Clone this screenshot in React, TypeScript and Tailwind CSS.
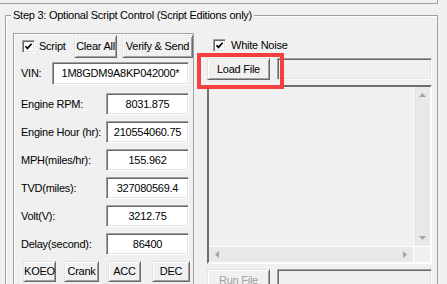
import type { ReactNode } from 'react';

const Btn = ({ children, className = '', disabled }: { children: ReactNode; className?: string; disabled?: boolean }) => (
  <div
    className={`flex shrink-0 items-center justify-center bg-[#f0f0f0] border border-t-[#e3e3e3] border-l-[#e3e3e3] border-b-[#696969] border-r-[#696969] shadow-[inset_1px_1px_0_#fff,inset_-1px_-1px_0_#a0a0a0] ${
      disabled ? 'text-[#a0a0a0]' : 'text-black'
    } ${className}`}
  >
    {children}
  </div>
);

const Field = ({ value, className = '', disabled }: { value?: string; className?: string; disabled?: boolean }) => (
  <div
    className={`flex shrink-0 items-center justify-center border border-t-[#a0a0a0] border-l-[#a0a0a0] border-b-white border-r-white shadow-[inset_1px_1px_0_#696969,inset_-1px_-1px_0_#e3e3e3] ${
      disabled ? 'bg-[#f0f0f0]' : 'bg-white'
    } ${className}`}
  >
    {value}
  </div>
);

const Check = () => (
  <div className="w-[13px] h-[13px] shrink-0 bg-white border border-t-[#a0a0a0] border-l-[#a0a0a0] border-b-white border-r-white shadow-[inset_1px_1px_0_#696969,inset_-1px_-1px_0_#e3e3e3] flex items-center justify-center">
    <svg width="9" height="9" viewBox="0 0 9 9">
      <path d="M1.5 4.2 L3.5 6.4 L7.6 1.8" fill="none" stroke="#000" strokeWidth="1.7" />
    </svg>
  </div>
);

const Arrow = ({ dir }: { dir: 'up' | 'down' | 'left' | 'right' }) => {
  const pts = {
    up: '0,4 7,4 3.5,0',
    down: '0,0 7,0 3.5,4',
    left: '4,0 4,7 0,3.5',
    right: '0,0 0,7 4,3.5',
  }[dir];
  const v = dir === 'up' || dir === 'down';
  return (
    <svg width={v ? 7 : 4} height={v ? 4 : 7} viewBox={v ? '0 0 7 4' : '0 0 4 7'}>
      <polygon points={pts} fill="#a3a3a3" />
    </svg>
  );
};

const rows = [
  ['Engine RPM:', '8031.875'],
  ['Engine Hour (hr):', '210554060.75'],
  ['MPH(miles/hr):', '155.962'],
  ['TVD(miles):', '327080569.4'],
  ['Volt(V):', '3212.75'],
  ['Delay(second):', '86400'],
];

export default function App() {
  return (
    <div className="w-[447px] h-[284px] overflow-hidden relative bg-[#f0f0f0] font-['Liberation_Sans',Arial,sans-serif] text-[11px] tracking-[-0.25px] text-black leading-none">
      {/* bottom edge of the group above */}
      <div className="w-[438px] h-[4px] border-b border-r border-[#a0a0a0]" />

      <div className="relative ml-[5px] mt-[11px] w-[433px] h-[300px] border-l border-t border-r border-[#a0a0a0] shadow-[inset_1px_1px_0_#fff]">
        <div className="absolute left-[5px] top-[-8px] h-[14px] px-[2px] bg-[#f0f0f0] flex items-center">
          Step 3: Optional Script Control (Script Editions only)
        </div>

        <div className="flex items-start pl-[7px] pt-[17px]">
          {/* left panel */}
          <div className="w-[181px] h-[300px] shrink-0 border border-[#a0a0a0] shadow-[inset_1px_1px_0_#fff]">
            <div className="flex items-center h-[23px] mt-[1px]">
              <div className="w-[58px] ml-[8px] flex items-center">
                <Check />
                <span className="ml-[4px]">Script</span>
              </div>
              <Btn className="w-[43px] h-[23px]">Clear All</Btn>
              <Btn className="w-[71px] h-[23px] ml-[5px]">Verify &amp; Send</Btn>
            </div>

            <div className="flex items-center h-[23px] mt-[4px]">
              <span className="w-[31px] ml-[7px]">VIN:</span>
              <Field className="w-[137px] h-[23px]" value="1M8GDM9A8KP042000*" />
            </div>

            <div className="flex flex-col gap-[6px] mt-[8px]">
              {rows.map(([label, value]) => (
                <div key={label} className="flex items-center h-[22px]">
                  <span className="w-[85px] ml-[7px]">{label}</span>
                  <Field className="w-[83px] h-[22px]" value={value} />
                </div>
              ))}
            </div>

            <div className="flex items-center mt-[6px]">
              <Btn className="w-[33px] h-[21px] ml-[9px]">KOEO</Btn>
              <Btn className="w-[35px] h-[21px] ml-[8px]">Crank</Btn>
              <Btn className="w-[33px] h-[21px] ml-[9px]">ACC</Btn>
              <Btn className="w-[38px] h-[21px] ml-[11px]">DEC</Btn>
            </div>
          </div>

          {/* right column */}
          <div className="w-[225px] ml-[13px] shrink-0">
            <div className="flex items-center h-[14px] mt-[5px]">
              <div className="ml-[6px]">
                <Check />
              </div>
              <span className="ml-[5px]">White Noise</span>
            </div>

            <div className="flex items-center h-[22px] mt-[6px]">
              <Btn className="w-[63px] h-[22px]">Load File</Btn>
              <Field className="flex-1 h-[22px] ml-[7px]" disabled />
            </div>

            <div className="mt-[5px] h-[179px] flex flex-col border-2 border-t-[#6e6e6e] border-l-[#6e6e6e] border-b-white border-r-white bg-[#f0f0f0]">
              <div className="flex flex-1">
                <div className="flex-1" />
                <div className="w-[17px] flex flex-col items-center justify-between py-[6px] bg-[#e8e8e8] border-l border-white">
                  <Arrow dir="up" />
                  <Arrow dir="down" />
                </div>
              </div>
              <div className="flex h-[16px] border-t border-white">
                <div className="flex-1 flex items-center justify-between px-[6px] bg-[#e8e8e8]">
                  <Arrow dir="left" />
                  <Arrow dir="right" />
                </div>
                <div className="w-[17px] bg-[#f0f0f0] border-l border-white" />
              </div>
            </div>

            <div className="flex items-center h-[22px] mt-[5px]">
              <Btn className="w-[63px] h-[22px]" disabled>
                Run File
              </Btn>
              <Field className="flex-1 h-[22px] ml-[7px]" disabled />
            </div>
          </div>
        </div>
      </div>

      {/* highlight annotation */}
      <div className="absolute left-[197px] top-[53px] w-[87px] h-[36px] border-4 border-[#f43f3f]" />
    </div>
  );
}
